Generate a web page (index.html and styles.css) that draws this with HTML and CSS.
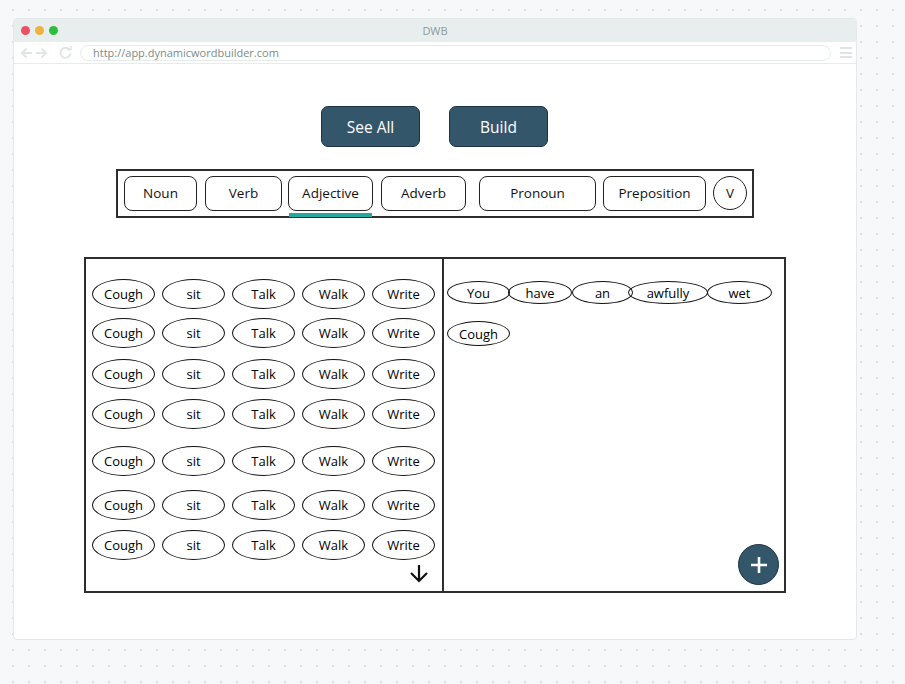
FILE: index.html
```html
<!DOCTYPE html>
<html>
<head>
<meta charset="utf-8">
<link rel="stylesheet" href="styles.css">
</head>
<body>
<div class="window">
  <div class="titlebar">
    <div class="lights">
      <span class="light red"></span>
      <span class="light yellow"></span>
      <span class="light green"></span>
    </div>
    <div class="title">DWB</div>
  </div>
  <div class="addressbar">
    <div class="nav">
      <svg width="13" height="12" viewBox="0 0 13 12"><path d="M12 6H2M6.5 1.5L2 6l4.5 4.5" fill="none" stroke="#dfe5e5" stroke-width="2"/></svg>
      <svg width="13" height="12" viewBox="0 0 13 12"><path d="M1 6h10M6.5 1.5L11 6l-4.5 4.5" fill="none" stroke="#dfe5e5" stroke-width="2"/></svg>
      <svg width="13" height="13" viewBox="0 0 13 13"><path d="M10.8 4.2A5 5 0 1 0 11.5 7.5" fill="none" stroke="#dfe5e5" stroke-width="2"/><path d="M8 3.5h4v-4" fill="none" stroke="#dfe5e5" stroke-width="1.6"/></svg>
    </div>
    <div class="url">http://app.dynamicwordbuilder.com</div>
    <div class="menu"><span></span><span></span><span></span></div>
  </div>
  <div class="content">
    <div class="actions">
      <button class="btn">See All</button>
      <button class="btn">Build</button>
    </div>
    <div class="tabbar">
      <div class="tab t-noun">Noun</div>
      <div class="tab t-verb">Verb</div>
      <div class="tab t-adj active">Adjective</div>
      <div class="tab t-adv">Adverb</div>
      <div class="tab t-pron">Pronoun</div>
      <div class="tab t-prep">Preposition</div>
      <div class="tab t-v">V</div>
    </div>
    <div class="panel">
      <div class="left">
        <div class="row"><span class="word">Cough</span><span class="word">sit</span><span class="word">Talk</span><span class="word">Walk</span><span class="word">Write</span></div>
        <div class="row r2"><span class="word">Cough</span><span class="word">sit</span><span class="word">Talk</span><span class="word">Walk</span><span class="word">Write</span></div>
        <div class="row r3"><span class="word">Cough</span><span class="word">sit</span><span class="word">Talk</span><span class="word">Walk</span><span class="word">Write</span></div>
        <div class="row r4"><span class="word">Cough</span><span class="word">sit</span><span class="word">Talk</span><span class="word">Walk</span><span class="word">Write</span></div>
        <div class="row r5"><span class="word">Cough</span><span class="word">sit</span><span class="word">Talk</span><span class="word">Walk</span><span class="word">Write</span></div>
        <div class="row r6"><span class="word">Cough</span><span class="word">sit</span><span class="word">Talk</span><span class="word">Walk</span><span class="word">Write</span></div>
        <div class="row r7"><span class="word">Cough</span><span class="word">sit</span><span class="word">Talk</span><span class="word">Walk</span><span class="word">Write</span></div>
        <div class="more">
          <svg width="20" height="18" viewBox="0 0 20 18"><path d="M10 0v16M2 8l8 8 8-8" fill="none" stroke="#111" stroke-width="2.2"/></svg>
        </div>
      </div>
      <div class="right">
        <div class="sentence">
          <span class="chip c-you">You</span>
          <span class="chip c-have">have</span>
          <span class="chip c-an">an</span>
          <span class="chip c-awfully">awfully</span>
          <span class="chip c-wet">wet</span>
        </div>
        <div class="picked">
          <span class="chip c-cough">Cough</span>
        </div>
        <div class="fab-row">
          <button class="fab">
            <svg width="18" height="18" viewBox="0 0 18 18"><path d="M9 1v16M1 9h16" stroke="#fff" stroke-width="2.6"/></svg>
          </button>
        </div>
      </div>
    </div>
  </div>
</div>
</body>
</html>
```
FILE: styles.css
```css
* { box-sizing: border-box; }
html, body { margin: 0; padding: 0; }
body {
  width: 905px;
  height: 684px;
  overflow: hidden;
  background-color: #f7f8fa;
  background-image: radial-gradient(circle, #dadde2 1px, transparent 1.4px);
  background-size: 16px 16px;
  background-position: 5px 2px;
  font-family: "Open Sans", "Noto Sans", sans-serif;
  padding: 18px 0 0 13px;
}
.window {
  width: 844px;
  height: 622px;
  background: #fff;
  border: 1px solid #e3e9e9;
  border-radius: 4px;
  overflow: hidden;
  display: flex;
  flex-direction: column;
}
.titlebar {
  height: 23px;
  background: #e8eeee;
  display: flex;
  align-items: center;
  position: relative;
  flex-shrink: 0;
}
.lights { display: flex; gap: 5px; padding-left: 7px; }
.light { width: 9px; height: 9px; border-radius: 50%; display: block; }
.red { background: #eb5160; }
.yellow { background: #efb23a; }
.green { background: #2bbf3a; }
.title {
  position: absolute;
  left: 0; right: 0; top: 0; bottom: 0;
  display: flex; align-items: center; justify-content: center;
  font-size: 11px;
  color: #8c9a9a;
}
.addressbar {
  height: 22px;
  border-bottom: 1.5px solid #e6ecec;
  display: flex;
  align-items: center;
  padding-left: 6px;
  flex-shrink: 0;
}
.nav { display: flex; align-items: center; gap: 2px; }
.nav svg:nth-child(3) { margin-left: 9px; }
.url {
  margin-left: 8px;
  width: 751px;
  height: 16px;
  border: 1.5px solid #e6ecec;
  border-radius: 8px;
  font-size: 11px;
  line-height: 13px;
  color: #7a8b8b;
  padding-left: 12px;
}
.menu { margin-left: 9px; display: flex; flex-direction: column; gap: 2.5px; }
.menu span { display: block; width: 12px; height: 2px; background: #dfe5e5; }
.content {
  flex: 1;
  display: flex;
  flex-direction: column;
  align-items: center;
  padding-top: 42px;
}
.actions { display: flex; gap: 29px; margin-left: -1px; }
.btn {
  width: 99px;
  height: 41px;
  background: #33566b;
  border: 1.5px solid #1b3344;
  border-radius: 7px;
  color: #fff;
  font-family: "Open Sans", sans-serif;
  font-size: 15.5px;
  padding: 0;
}
.tabbar {
  margin-top: 22px;
  width: 638px;
  height: 49px;
  border: 2px solid #2e2e2e;
  display: flex;
  align-items: center;
  padding-left: 6px;
  padding-bottom: 1px;
}
.tab {
  height: 35px;
  border: 1.7px solid #222;
  border-radius: 8px;
  display: flex;
  align-items: center;
  justify-content: center;
  font-size: 13.5px;
  color: #111;
  position: relative;
  flex-shrink: 0;
}
.t-noun { width: 73px; }
.t-verb { width: 77px; margin-left: 8px; }
.t-adj { width: 85px; margin-left: 6px; }
.t-adv { width: 85px; margin-left: 8px; }
.t-pron { width: 117px; margin-left: 13px; }
.t-prep { width: 103px; margin-left: 7px; }
.t-v { width: 34px; height: 34px; border-radius: 50%; margin-left: 7px; }
.active::after {
  content: "";
  position: absolute;
  left: 0; right: 0;
  bottom: -7px;
  height: 4px;
  background: #27a7a0;
}
.panel {
  margin-top: 39px;
  width: 702px;
  height: 336px;
  border: 2px solid #2e2e2e;
  display: flex;
}
.left {
  width: 358px;
  border-right: 2px solid #2e2e2e;
  padding: 20px 0 0 6px;
  display: flex;
  flex-direction: column;
}
.row {
  display: grid;
  grid-template-columns: repeat(5, 63px);
  column-gap: 7px;
}
.r2 { margin-top: 9px; }
.r3 { margin-top: 11px; }
.r4 { margin-top: 10px; }
.r5 { margin-top: 17px; }
.r6 { margin-top: 14px; }
.r7 { margin-top: 10px; }
.word {
  height: 30px;
  border: 1.7px solid #111;
  border-radius: 50%;
  display: flex;
  align-items: center;
  justify-content: center;
  font-size: 13px;
  color: #000;
}
.more {
  display: flex;
  justify-content: flex-end;
  padding-right: 13px;
  margin-top: 5px;
}
.right {
  flex: 1;
  display: flex;
  flex-direction: column;
  padding: 22px 5px 6px 3px;
}
.sentence { display: flex; }
.chip {
  height: 23px;
  border: 1.7px solid #111;
  border-radius: 50%;
  display: flex;
  align-items: center;
  justify-content: center;
  font-size: 13px;
  color: #000;
  flex-shrink: 0;
}
.c-you { width: 63px; }
.c-have { width: 64px; margin-left: -2px; }
.c-an { width: 61px; }
.c-awfully { width: 80px; margin-left: -5px; }
.c-wet { width: 65px; margin-left: -1px; }
.picked { display: flex; margin-top: 17px; }
.c-cough { width: 63px; height: 25px; }
.fab-row { margin-top: auto; display: flex; justify-content: flex-end; }
.fab {
  width: 41px;
  height: 41px;
  border-radius: 50%;
  background: #33566b;
  border: 1.5px solid #1b3344;
  padding: 0;
  display: flex;
  align-items: center;
  justify-content: center;
}
```
